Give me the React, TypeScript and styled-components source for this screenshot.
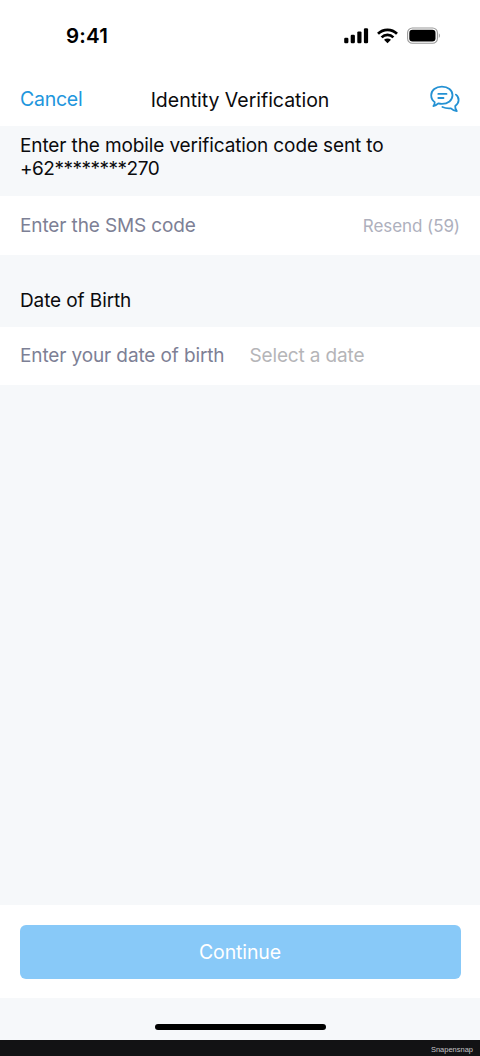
import React from "react";
import styled, { createGlobalStyle } from "styled-components";

const GlobalStyle = createGlobalStyle`
  *, *::before, *::after { box-sizing: border-box; }
  body {
    margin: 0;
    background: #f6f8fa;
    font-family: Inter, "Liberation Sans", sans-serif;
    color: #0b0b0d;
  }
`;

const Screen = styled.div`
  display: flex;
  flex-direction: column;
  height: 1056px;
  width: 100%;
`;

const StatusBar = styled.div`
  display: flex;
  flex: none;
  align-items: center;
  justify-content: space-between;
  height: 72px;
  padding: 0 39px 0 66px;
  background: #fff;
`;

const Clock = styled.time`
  font-size: 20.5px;
  font-weight: 600;
  line-height: 24px;
  letter-spacing: 0.2px;
  color: #000;
`;

const StatusIcons = styled.svg`
  display: block;
  width: 98px;
  height: 18px;
`;

const NavBar = styled.header`
  display: grid;
  flex: none;
  grid-template-columns: 1fr auto 1fr;
  align-items: center;
  height: 54px;
  padding: 0 20px;
  background: #fff;
`;

const TextButton = styled.button`
  justify-self: start;
  padding: 0;
  border: 0;
  background: none;
  font: inherit;
  font-size: 19.5px;
  line-height: 24px;
  letter-spacing: -0.25px;
  color: #2196dd;
`;

const Title = styled.h1`
  margin: 0;
  padding-top: 1px;
  font-size: 19.5px;
  font-weight: 400;
  line-height: 24px;
  letter-spacing: -0.02px;
`;

const IconButton = styled.button`
  display: block;
  justify-self: end;
  padding: 0;
  border: 0;
  background: none;
  color: #2491d3;

  svg {
    display: block;
  }
`;

const Note = styled.p`
  flex: none;
  height: 70px;
  margin: 0;
  padding: 8px 20px 0;
  font-size: 19px;
  line-height: 23px;
  letter-spacing: -0.12px;
`;

const PhoneNumber = styled.span`
  display: block;
  letter-spacing: -0.5px;
`;

const Row = styled.div<{ $height: number }>`
  display: flex;
  flex: none;
  align-items: center;
  height: ${(p) => p.$height}px;
  padding: 0 20px;
  background: #fff;
`;

const Hint = styled.span`
  font-size: 19px;
  line-height: 24px;
  letter-spacing: -0.12px;
  color: #7d8095;
`;

const DateValue = styled.span`
  margin-left: 25px;
  font-size: 19px;
  line-height: 24px;
  letter-spacing: -0.14px;
  color: #b5b5b8;
`;

const Resend = styled.span`
  margin-left: auto;
  font-size: 17px;
  line-height: 22px;
  letter-spacing: -0.07px;
  color: #aeb0bd;
`;

const SectionLabel = styled.h2`
  flex: none;
  height: 72px;
  margin: 0;
  padding: 34px 20px 0;
  font-size: 19px;
  font-weight: 400;
  line-height: 24px;
  letter-spacing: -0.1px;
`;

const Spacer = styled.div`
  flex: 1;
`;

const Footer = styled.footer`
  flex: none;
  height: 93px;
  padding: 20px 19.5px;
  background: #fff;
`;

const Continue = styled.button`
  display: block;
  width: 100%;
  height: 53.5px;
  padding: 0;
  border: 0;
  border-radius: 6px;
  background: #88c9f8;
  font: inherit;
  font-size: 19.5px;
  line-height: 24px;
  letter-spacing: -0.12px;
  color: #fff;
`;

const HomeArea = styled.div`
  display: flex;
  flex: none;
  justify-content: center;
  height: 42px;
  padding-top: 26px;
`;

const HomeIndicator = styled.div`
  width: 171px;
  height: 6px;
  border-radius: 3px;
  background: #000;
`;

const Credit = styled.div`
  display: flex;
  flex: none;
  align-items: center;
  justify-content: flex-end;
  height: 16px;
  padding: 3px 7px 0 0;
  background: #121214;
  font-family: "Liberation Sans", sans-serif;
  font-size: 7.5px;
  line-height: 10px;
  color: #c4c4c6;
`;

function DeviceIcons() {
  return (
    <StatusIcons viewBox="343 27 98 18" aria-hidden="true">
      <rect x="344.2" y="37.8" width="4.2" height="5.4" rx="1.2" />
      <rect x="350.7" y="34.8" width="4.2" height="8.4" rx="1.2" />
      <rect x="357.3" y="31.4" width="4.2" height="11.8" rx="1.2" />
      <rect x="363.9" y="28.2" width="4.2" height="15" rx="1.2" />
      <g fill="none" stroke="#000" strokeWidth="2.7">
        <path d="M378 33.8C383.3 28.5 391.7 28.5 397 33.8" />
        <path d="M381.6 37.4C384.9 34.1 390.1 34.1 393.4 37.4" />
      </g>
      <path d="M384 39.8C386 38 389 38 391 39.8L387.5 43.3Z" />
      <rect x="407.6" y="28" width="29.8" height="15.2" rx="4.8" fill="none" stroke="#999" strokeWidth="1.1" />
      <rect x="409.3" y="29.8" width="26.2" height="11.6" rx="3.2" />
      <path d="M438.8 33.2C440.5 34 440.5 37.2 438.8 38Z" fill="#aaa" />
    </StatusIcons>
  );
}

function ChatIcon() {
  return (
    <svg
      width="30"
      height="28"
      viewBox="431 85 30 28"
      fill="none"
      stroke="currentColor"
      strokeWidth="1.8"
      strokeLinecap="round"
      strokeLinejoin="round"
      aria-hidden="true"
    >
      <path d="M435.7 102.1C433.4 100.4 432.2 98 432.2 95.2C432.2 90.2 436.8 86.6 442.9 86.6C449 86.6 453.5 90.2 453.5 95.2C453.5 100.3 449 103.9 442.9 103.9C441.6 103.9 440.4 103.7 439.3 103.4C437.9 104.7 436.2 105.7 434.4 106C435.3 104.9 435.8 103.5 435.7 102.1Z" />
      <path d="M439.3 93.9H447.5M439.3 98H444.5" />
      <path d="M456.9 94.6C458.9 96.1 459.8 98.1 459.6 100.3C459.5 102.6 458.3 104.6 456.2 106C456 107.8 456.6 109.5 457.8 111C455.5 110.7 453.5 109.8 451.9 108.3C448.9 108.6 446 108.2 443.4 107" />
    </svg>
  );
}

export default function App() {
  return (
    <>
      <GlobalStyle />
      <Screen>
        <StatusBar>
          <Clock>9:41</Clock>
          <DeviceIcons />
        </StatusBar>
        <NavBar>
          <TextButton type="button">Cancel</TextButton>
          <Title>Identity Verification</Title>
          <IconButton type="button" aria-label="Support chat">
            <ChatIcon />
          </IconButton>
        </NavBar>
        <Note>
          Enter the mobile verification code sent to
          <PhoneNumber>+62********270</PhoneNumber>
        </Note>
        <Row $height={59}>
          <Hint>Enter the SMS code</Hint>
          <Resend>Resend (59)</Resend>
        </Row>
        <SectionLabel>Date of Birth</SectionLabel>
        <Row $height={58}>
          <Hint>Enter your date of birth</Hint>
          <DateValue>Select a date</DateValue>
        </Row>
        <Spacer />
        <Footer>
          <Continue type="button">Continue</Continue>
        </Footer>
        <HomeArea>
          <HomeIndicator />
        </HomeArea>
        <Credit>Snapensnap</Credit>
      </Screen>
    </>
  );
}
